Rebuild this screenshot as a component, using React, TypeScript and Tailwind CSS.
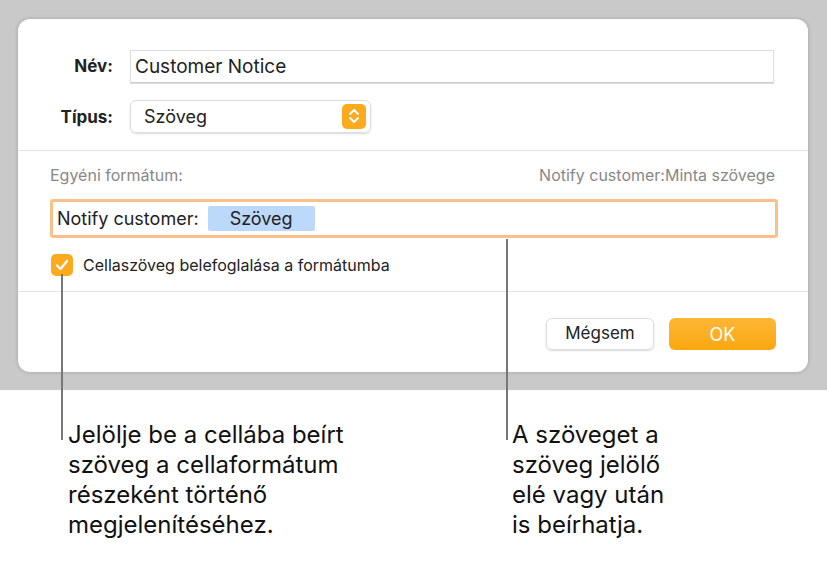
import React from "react";

export default function App() {
  const f = { fontFamily: "Inter, 'Liberation Sans', sans-serif" };
  return (
    <div className="relative w-[827px] h-[564px] bg-white overflow-hidden text-[#222]" style={f}>
      <div className="h-[390px] bg-[#c9c9c9] pt-[19px] px-[18px]">
        <div className="w-[790px] h-[353px] bg-white rounded-[12px] shadow-[0_0_4px_rgba(0,0,0,0.2)] flex flex-col">
          <div className="flex items-center h-[34px] mt-[31px]">
            <div className="w-[95px] text-right font-bold text-[17px]">Név:</div>
            <div className="ml-[17px] w-[644px] h-[34px] border border-[#ddd] flex items-center px-[4px] text-[19px] shadow-[inset_0_-1px_0_#ccc]">Customer Notice</div>
          </div>
          <div className="flex items-center h-[34px] mt-[15px]">
            <div className="w-[95px] text-right font-bold text-[17px] mt-[4px]">Típus:</div>
            <div className="ml-[17px] w-[241px] h-[33px] border border-[#ddd] rounded-[6px] shadow-[0_1px_2px_rgba(0,0,0,0.15)] flex items-center justify-between pl-[13px] pr-[4px] text-[18px]">
              <span>Szöveg</span>
              <div className="w-[24px] h-[25px] rounded-[5px] bg-[#fdaa1e] flex items-center justify-center">
                <svg width="12" height="18" viewBox="0 0 12 18" fill="none" stroke="white" strokeWidth="2" strokeLinecap="round" strokeLinejoin="round"><path d="M2 7l4-4 4 4M2 11l4 4 4-4" /></svg>
              </div>
            </div>
          </div>
          <div className="h-px bg-[#e2e2e2] mt-[17px]" />
          <div className="flex justify-between items-center mt-[12px] px-[32px] text-[16px] text-[#888]">
            <span>Egyéni formátum:</span>
            <span className="mr-[1px]">Notify customer:Minta szövege</span>
          </div>
          <div className="ml-[32px] mt-[12px] w-[728px] h-[39px] border-[3px] border-[#f9c08c] rounded-[3px] flex items-center px-[4px] text-[18px]">
            <span>Notify customer:</span>
            <span className="ml-[9px] w-[107px] h-[25px] bg-[#bcd8fb] rounded-[2px] flex items-center justify-center">Szöveg</span>
          </div>
          <div className="flex items-center ml-[33px] mt-[15px]">
            <div className="w-[22px] h-[22px] rounded-[5px] bg-[#fdaa1e] flex items-center justify-center">
              <svg width="14" height="12" viewBox="0 0 14 12" fill="none" stroke="white" strokeWidth="2.4" strokeLinecap="round" strokeLinejoin="round"><path d="M2 6.5l3.5 3.5L12 2" /></svg>
            </div>
            <span className="ml-[10px] text-[16px]">Cellaszöveg belefoglalása a formátumba</span>
          </div>
          <div className="h-px bg-[#e2e2e2] mt-[14px]" />
          <div className="flex justify-end gap-[15px] mt-[26px] pr-[32px]">
            <div className="w-[108px] h-[32px] border border-[#ddd] rounded-[6px] shadow-[0_1px_2px_rgba(0,0,0,0.15)] flex items-center justify-center text-[17px]">Mégsem</div>
            <div className="w-[107px] h-[32px] rounded-[6px] bg-gradient-to-b from-[#fdb733] to-[#fca70c] text-white flex items-center justify-center text-[18px]">OK</div>
          </div>
        </div>
      </div>
      <div className="absolute left-[61px] top-[274px] w-[2px] h-[166px] bg-[#777]" />
      <div className="absolute left-[506px] top-[239px] w-[2px] h-[201px] bg-[#777]" />
      <div className="flex text-[24px] leading-[30px] text-[#111] mt-[30px]">
        <div className="ml-[68px] w-[444px]">Jelölje be a cellába beírt<br />szöveg a cellaformátum<br />részeként történő<br />megjelenítéséhez.</div>
        <div>A szöveget a<br />szöveg jelölő<br />elé vagy után<br />is beírhatja.</div>
      </div>
    </div>
  );
}
